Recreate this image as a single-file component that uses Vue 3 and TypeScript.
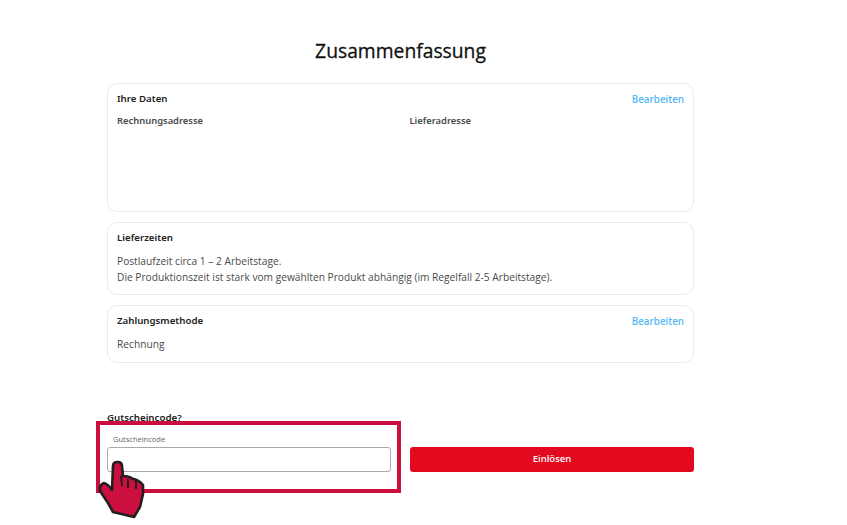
<template>
  <div class="page">
    <h1 class="title">Zusammenfassung</h1>

    <section class="card card-data">
      <div class="card-head">
        <h2>Ihre Daten</h2>
        <a class="edit">Bearbeiten</a>
      </div>
      <div class="addresses">
        <h3>Rechnungsadresse</h3>
        <h3>Lieferadresse</h3>
      </div>
    </section>

    <section class="card card-times">
      <div class="card-head">
        <h2>Lieferzeiten</h2>
      </div>
      <p>Postlaufzeit circa 1 – 2 Arbeitstage.</p>
      <p>Die Produktionszeit ist stark vom gewählten Produkt abhängig (im Regelfall 2-5 Arbeitstage).</p>
    </section>

    <section class="card card-pay">
      <div class="card-head">
        <h2>Zahlungsmethode</h2>
        <a class="edit">Bearbeiten</a>
      </div>
      <p class="pay-value">Rechnung</p>
    </section>

    <div class="voucher">
      <h2>Gutscheincode?</h2>
      <div class="voucher-row">
        <div class="field">
          <label for="code">Gutscheincode</label>
          <input id="code" type="text" />
        </div>
        <button type="button">Einlösen</button>
      </div>

      <!-- Markierung liegt über dem Formular -->
      <div class="highlight"></div>
      <svg class="hand" viewBox="0 0 52 64" width="52" height="64">
        <path
          d="M17 9 Q17 5 21.5 5 Q26 5 26 9 L27 19 Q33 19 36 21.5 Q43 23 47 28 L47 37 L44 50 L38 60 L17 55 L12 46 L4 34 Q3 28 8 26 Q12 27 16 33 Z"
          fill="#cb0f3f"
          stroke="#231f20"
          stroke-width="2.6"
          stroke-linejoin="round"
        />
        <path d="M25 19 L26 29 M32 22 L32 31 M40 24 L40 32" fill="none" stroke="#231f20" stroke-width="2" />
      </svg>
    </div>
  </div>
</template>

<script setup lang="ts"></script>

<style>
html,
body {
  margin: 0;
  background: #fff;
}
</style>

<style scoped>
.page {
  width: 587px;
  height: 525px;
  margin-left: 107px;
  font-family: "Open Sans", "Noto Sans", sans-serif;
  font-size: 10.2px;
  color: #4a4a4a;
}

.title {
  margin: 0;
  padding-top: 37px;
  height: 46px;
  font-size: 19.3px;
  line-height: 28px;
  font-weight: 400;
  color: #111;
  text-align: center;
  -webkit-text-stroke: 0.3px #111;
}

.card {
  box-sizing: border-box;
  border: 1px solid #ebebeb;
  border-radius: 10px;
  padding: 9px 9px 0;
  margin-bottom: 10px;
}

.card-data {
  height: 129px;
}

.card-times {
  height: 73px;
}

.card-pay {
  height: 58px;
}

.card-head {
  display: flex;
  justify-content: space-between;
  align-items: center;
  height: 12px;
}

h2 {
  margin: 0;
  font-family: "Noto Sans", sans-serif;
  font-size: 9.7px;
  line-height: 12px;
  font-weight: 600;
  color: #222;
}

h3 {
  margin: 0;
  font-family: "Noto Sans", sans-serif;
  font-size: 9.4px;
  line-height: 12px;
  font-weight: 600;
  color: #4a4a4a;
}

.edit {
  font-size: 9.8px;
  font-weight: 600;
  color: #55b9f8;
}

.addresses {
  display: grid;
  grid-template-columns: 292.5px 1fr;
  margin-top: 10px;
}

.card-times .card-head {
  margin-bottom: 9px;
}

p {
  margin: 0;
  line-height: 16px;
}

.pay-value {
  margin-top: 9px;
}

.voucher {
  position: relative;
  margin-top: 49px;
}

.voucher-row {
  display: flex;
  align-items: flex-end;
  gap: 19px;
  margin-top: 10px;
}

.field {
  width: 284px;
}

label {
  display: block;
  padding-left: 6px;
  margin-bottom: 2px;
  font-size: 7.5px;
  line-height: 11px;
  color: #666;
}

input {
  display: block;
  box-sizing: border-box;
  width: 100%;
  height: 25px;
  border: 1px solid #a9a9a9;
  border-radius: 3px;
  background: #fff;
  outline: none;
}

button {
  flex: 1;
  height: 25px;
  border: 0;
  border-radius: 3px;
  background: #e30a20;
  color: #fff;
  font-family: inherit;
  font-size: 9.5px;
  font-weight: 600;
  padding: 0 0 3px;
}

.highlight {
  position: absolute;
  left: -11px;
  top: 9px;
  width: 305px;
  height: 72px;
  box-sizing: border-box;
  border: 4px solid #cb0f3f;
  pointer-events: none;
}

.hand {
  position: absolute;
  left: -11px;
  top: 45px;
}
</style>
